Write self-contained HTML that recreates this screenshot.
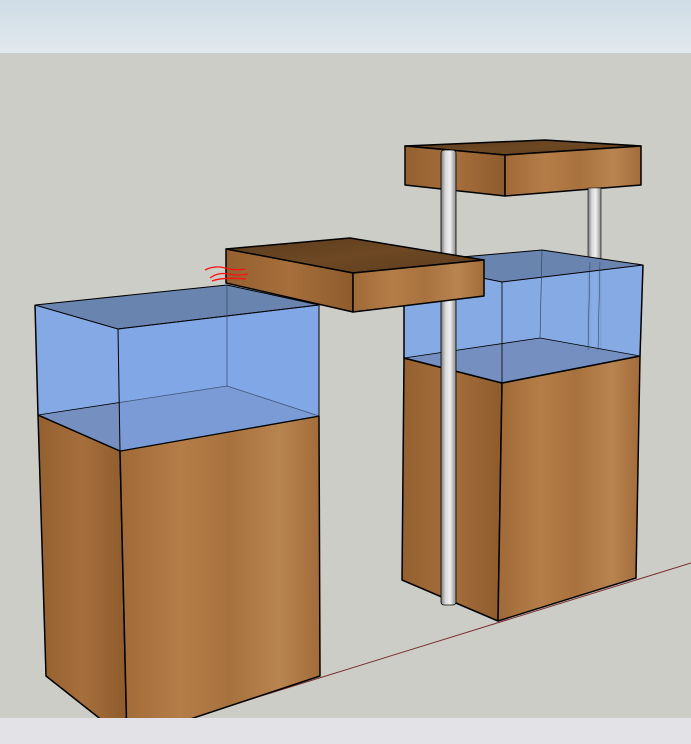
<!DOCTYPE html>
<html><head><style>html,body{margin:0;padding:0;width:691px;height:744px;overflow:hidden}</style></head>
<body>
<svg width="691" height="744" viewBox="0 0 691 744" xmlns="http://www.w3.org/2000/svg">
<defs>
<linearGradient id="sky" x1="0" y1="0" x2="0" y2="1"><stop offset="0" stop-color="#cfdce6"/><stop offset="1" stop-color="#e2e9ee"/></linearGradient>
<linearGradient id="wf" x1="0" y1="0" x2="1" y2="0"><stop offset="0" stop-color="#a06a38"/><stop offset=".3" stop-color="#b47d48"/><stop offset=".55" stop-color="#a8723e"/><stop offset=".8" stop-color="#b8844f"/><stop offset="1" stop-color="#a26c3a"/></linearGradient>
<linearGradient id="ws" x1="0" y1="0" x2="1" y2="0"><stop offset="0" stop-color="#94602f"/><stop offset=".5" stop-color="#a66f3c"/><stop offset="1" stop-color="#8e5b2c"/></linearGradient>
<linearGradient id="wt" x1="0" y1="0" x2="1" y2="1"><stop offset="0" stop-color="#5a3a1c"/><stop offset=".5" stop-color="#6e4824"/><stop offset="1" stop-color="#5c3c1e"/></linearGradient>
<linearGradient id="pole" x1="0" y1="0" x2="1" y2="0"><stop offset="0" stop-color="#7a7a7a"/><stop offset=".3" stop-color="#d8d8d8"/><stop offset=".6" stop-color="#f0f0f0"/><stop offset="1" stop-color="#8a8a8a"/></linearGradient>
</defs>
<rect x="0" y="0" width="691" height="53" fill="url(#sky)"/>
<rect x="0" y="53" width="691" height="665" fill="#cdcdc8"/>
<line x1="190" y1="718" x2="691" y2="563" stroke="#7a3030" stroke-width="1"/>

<g stroke="#000" stroke-linejoin="round">
<!-- top slab -->
<polygon points="405,146 545,140 641,146 505,155" fill="url(#wt)" stroke-width="1.5"/>
<polygon points="405,146 505,155 505,196 405,185" fill="url(#ws)" stroke-width="1.5"/>
<polygon points="505,155 641,146 641,185 505,196" fill="url(#wf)" stroke-width="1.5"/>
<!-- pole2 -->
<rect x="588" y="188" width="13" height="162" fill="url(#pole)" stroke-width="0.6"/>

<!-- right cabinet -->
<polygon points="404,358 502,383 498,621 402,580" fill="url(#ws)" stroke-width="1.5"/>
<polygon points="502,383 640,356 636,578 498,621" fill="url(#wf)" stroke-width="1.5"/>
<!-- right tank -->
<polygon points="404,262 542,250 643,265 640,356 502,383 404,358" fill="#7ea6e6" fill-opacity="0.9" stroke="none"/>
<polygon points="404,262 542,250 643,265 502,282" fill="#6a84b0" stroke-width="1"/>
<polygon points="404,358 540,338 640,356 502,383" fill="#7590c0" stroke-width="0.8"/>
<polyline points="404,262 404,358 502,383 640,356 643,265" fill="none" stroke-width="1.5"/>
<line x1="502" y1="282" x2="502" y2="383" stroke-width="0.8"/>
<line x1="542" y1="250" x2="540" y2="338" stroke-width="0.6" stroke="#2a3a5a"/>
<line x1="590" y1="262" x2="588" y2="350" stroke-width="0.5" stroke="#2a3a5a"/>
<line x1="600" y1="262" x2="598" y2="350" stroke-width="0.5" stroke="#2a3a5a"/>
<!-- pole1 -->
<rect x="441" y="150" width="15" height="455" rx="3" fill="url(#pole)" stroke-width="0.8"/>

<!-- left cabinet -->
<polygon points="38,415 120,451 127,740 46,676" fill="url(#ws)" stroke-width="1.5"/>
<polygon points="120,451 319,416 320,676 127,740" fill="url(#wf)" stroke-width="1.5"/>
<!-- left tank -->
<polygon points="35,305 227,285 319,305 319,416 120,451 38,415" fill="#7ea6e6" fill-opacity="0.92" stroke="none"/>
<polygon points="35,305 227,285 319,305 118,329" fill="#6a84b0" stroke-width="1"/>
<polygon points="38,415 227,386 319,416 120,451" fill="#7590c0" stroke-width="0.8"/>
<polygon points="118,329 319,305 319,416 120,451" fill="#7fa6ea" fill-opacity="0.5" stroke-width="1"/>
<line x1="227" y1="285" x2="227" y2="386" stroke-width="0.6" stroke="#2a3a5a"/>
<polyline points="35,305 38,415 120,451" fill="none" stroke-width="1.5"/>

<!-- middle slab -->
<polygon points="226,249 350,238 484,260 353,273" fill="url(#wt)" stroke-width="1.5"/>
<polygon points="226,249 353,273 353,312 226,283" fill="url(#ws)" stroke-width="1.5"/>
<polygon points="353,273 484,260 484,296 353,312" fill="url(#wf)" stroke-width="1.5"/>
</g>
<path d="M205,270 q10,-5 20,-2 q10,3 20,1 M210,278 q8,-6 18,-4 q10,2 20,0 M212,281 q10,-4 34,-2" stroke="#ff1010" stroke-width="1.3" fill="none"/>
<rect x="0" y="718" width="691" height="26" fill="#e3e3e7"/>
</svg>
</body></html>
